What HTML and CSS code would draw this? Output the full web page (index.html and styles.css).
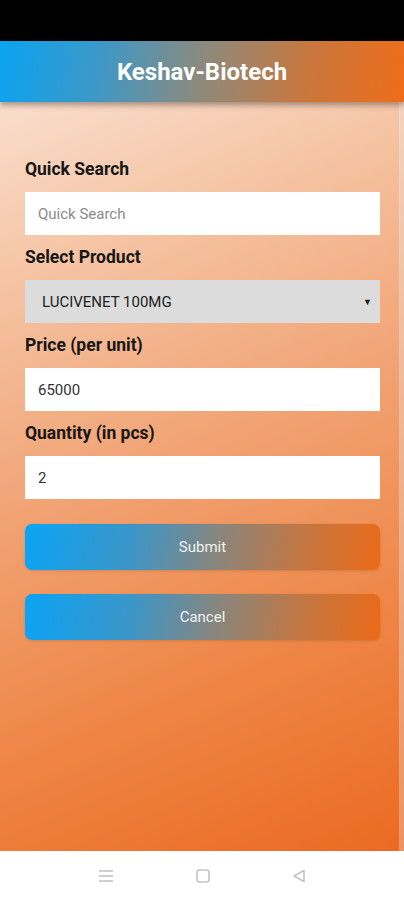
FILE: index.html
```html
<!DOCTYPE html>
<html>
<head>
<meta charset="utf-8">
<link rel="stylesheet" href="styles.css">
</head>
<body>
<div class="status"></div>
<div class="app">
  <header class="topbar"><h1 class="title">Keshav-Biotech</h1></header>
  <main class="form">
    <div class="field">
      <label class="label">Quick Search</label>
      <div class="input placeholder">Quick Search</div>
    </div>
    <div class="field">
      <label class="label">Select Product</label>
      <div class="input select"><span>LUCIVENET 100MG</span><span class="caret">▼</span></div>
    </div>
    <div class="field">
      <label class="label">Price (per unit)</label>
      <div class="input">65000</div>
    </div>
    <div class="field">
      <label class="label">Quantity (in pcs)</label>
      <div class="input">2</div>
    </div>
    <div class="buttons">
      <button class="btn">Submit</button>
      <button class="btn">Cancel</button>
    </div>
  </main>
</div>
<nav class="navbar">
  <svg width="18" height="16" viewBox="0 0 18 16"><g stroke="#c4c4c4" stroke-width="1.6"><line x1="2" y1="3" x2="16" y2="3"/><line x1="2" y1="8" x2="16" y2="8"/><line x1="2" y1="13" x2="16" y2="13"/></g></svg>
  <svg width="16" height="16" viewBox="0 0 16 16"><rect x="2" y="2" width="12" height="12" rx="2.5" fill="none" stroke="#c4c4c4" stroke-width="1.6"/></svg>
  <svg width="16" height="16" viewBox="0 0 16 16"><path d="M13 2.5 L3 8 L13 13.5 Z" fill="none" stroke="#c4c4c4" stroke-width="1.6" stroke-linejoin="round"/></svg>
</nav>
</body>
</html>
```
FILE: styles.css
```css
* { box-sizing: border-box; }
html, body { margin: 0; padding: 0; }
body {
  width: 404px;
  height: 900px;
  font-family: Roboto, "Liberation Sans", sans-serif;
  background: #fff;
  overflow: hidden;
}
.status { height: 41px; background: #000; }
.app {
  height: 810px;
  display: flex;
  flex-direction: column;
  background: linear-gradient(158deg, #fbe6da 0%, #f5c4a4 25%, #f1a273 50%, #ee8545 75%, #eb6a22 100%);
  box-shadow: inset -4px 0 0 rgba(0,0,0,0.02), inset -5px 0 0 rgba(255,255,255,0.3);
}
.topbar {
  height: 61px;
  display: flex;
  align-items: center;
  justify-content: center;
  background: linear-gradient(100deg, #0aa3f0 0%, #3d98c8 25%, #8d8a7c 50%, #c8773e 75%, #ef6c19 100%);
  box-shadow: 0 3px 6px rgba(0,0,0,0.35);
  position: relative;
  z-index: 1;
}
.title {
  margin: 0;
  color: #fff;
  font-size: 24px;
  font-weight: 700;
}
.form {
  padding: 57px 24px 0 25px;
  display: flex;
  flex-direction: column;
  gap: 12px;
}
.field { display: flex; flex-direction: column; }
.label {
  font-size: 17.5px;
  font-weight: 700;
  line-height: 20px;
  color: #161616;
  margin-bottom: 13px;
}
.input {
  height: 43px;
  background: #fff;
  display: flex;
  align-items: center;
  padding: 0 13px;
  font-size: 15px;
  color: #333;
}
.placeholder { color: #8a8a8a; }
.select {
  background: #dcdcdc;
  justify-content: space-between;
  padding: 0 8px 0 17px;
  color: #222;
}
.caret { font-size: 9px; color: #222; }
.buttons {
  margin-top: 13px;
  display: flex;
  flex-direction: column;
  gap: 24px;
}
.btn {
  height: 46px;
  border: none;
  border-radius: 7px;
  background: linear-gradient(100deg, #0aa3f5 0%, #3b96c8 30%, #8b857a 55%, #c47641 78%, #ec6a18 100%);
  color: #f2f2f2;
  font-family: Roboto, "Liberation Sans", sans-serif;
  font-size: 15px;
  box-shadow: 0 1px 3px rgba(0,0,0,0.12);
}
.navbar {
  height: 49px;
  background: #fff;
  display: flex;
  align-items: center;
  justify-content: center;
  gap: 80px;
}
```
